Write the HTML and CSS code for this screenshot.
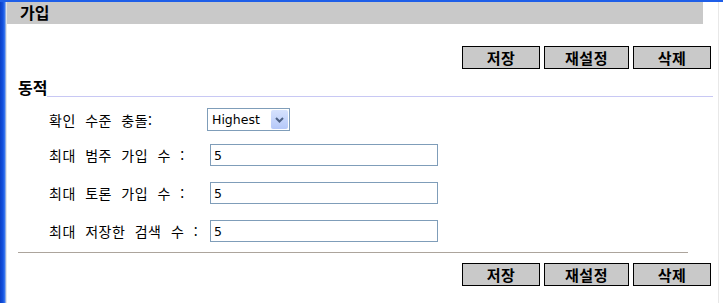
FILE: index.html
```html
<!DOCTYPE html>
<html lang="ko">
<head>
    <meta charset="UTF-8">
    <title>가입</title>
    <link rel="stylesheet" href="styles.css">
</head>
<body>
    <div class="window">
        <div class="edge"></div>
        <div class="content">
            <div class="titlebar">가입</div>

            <div class="toolbar">
                <button class="btn btn-save">저장</button>
                <button class="btn btn-reset">재설정</button>
                <button class="btn btn-delete">삭제</button>
            </div>

            <div class="section-head">
                <span class="section-title">동적</span>
                <span class="section-line"></span>
            </div>

            <form class="settings">
                <div class="row row-select">
                    <label for="level">확인 수준 충돌:</label>
                    <div class="select">
                        <span class="select-value">Highest</span>
                        <span class="select-arrow">
                            <svg width="9" height="6" viewBox="0 0 9 6"><path d="M1 1 L4.5 4.5 L8 1" fill="none" stroke="#4d6185" stroke-width="2"/></svg>
                        </span>
                    </div>
                </div>
                <div class="row">
                    <label for="max-cat">최대 범주 가입 수 :</label>
                    <input type="text" id="max-cat" value="5">
                </div>
                <div class="row">
                    <label for="max-topic">최대 토론 가입 수 :</label>
                    <input type="text" id="max-topic" value="5">
                </div>
                <div class="row">
                    <label for="max-search">최대 저장한 검색 수 :</label>
                    <input type="text" id="max-search" value="5">
                </div>
            </form>

            <div class="divider"></div>

            <div class="toolbar toolbar-bottom">
                <button class="btn btn-save">저장</button>
                <button class="btn btn-reset">재설정</button>
                <button class="btn btn-delete">삭제</button>
            </div>
        </div>
    </div>
</body>
</html>
```

FILE: styles.css
```css
body {
    margin: 0;
    background-color: #fff;
    color: #000;
    font-family: "Noto Sans CJK KR", "DejaVu Sans", sans-serif;
    overflow: hidden;
}
.window {
    display: flex;
    height: 303px;
    border-top: 2px solid #1f5fe8;
    box-sizing: border-box;
}
.edge {
    width: 7px;
    flex: none;
    background: linear-gradient(to right, #0b3fc4 0, #1452e0 3px, #3f7df2 5px, #d4d8dc 6px, #f2f2f2 7px);
}
.content {
    flex: 1;
    border-right: 1px solid #e8e8e8;
    margin-right: 4px;
}
.titlebar {
    height: 22px;
    margin-right: 15px;
    padding-left: 13px;
    background-color: #c9c9c9;
    font-size: 16px;
    font-weight: bold;
    line-height: 20px;
}
.toolbar {
    display: flex;
    justify-content: flex-end;
    gap: 4px;
    margin-top: 22px;
    margin-right: 7px;
}
.toolbar-bottom {
    margin-top: 10px;
}
.btn {
    height: 23px;
    padding: 0;
    border: 1px solid #000;
    background-color: #c9c9c9;
    font-family: "Noto Sans CJK KR", sans-serif;
    font-size: 15px;
    font-weight: bold;
    line-height: 20px;
    letter-spacing: 0.5px;
}
.btn-save, .btn-delete {
    width: 78px;
}
.btn-reset {
    width: 85px;
}
.section-head {
    display: flex;
    align-items: flex-end;
    margin: 8px 5px 0 11px;
}
.section-title {
    font-size: 16px;
    font-weight: bold;
    line-height: 20px;
}
.section-line {
    flex: 1;
    border-bottom: 1px solid #c8c8f4;
}
.settings {
    margin-top: 11px;
    padding-left: 42px;
}
.row {
    display: flex;
    align-items: center;
    height: 22px;
    margin-top: 16px;
}
.row-select {
    height: 23px;
    margin-top: 0;
    margin-bottom: -3px;
}
label {
    width: 160px;
    flex: none;
    font-size: 14px;
    word-spacing: 5px;
    letter-spacing: 0.5px;
}
.select {
    display: flex;
    align-items: center;
    justify-content: space-between;
    width: 76px;
    height: 21px;
    border: 1px solid #7f9db9;
    padding: 0 1px 0 4px;
    box-sizing: content-box;
    margin-left: -2px;
}
.select-value {
    font-family: "DejaVu Sans", sans-serif;
    font-size: 12.5px;
}
.select-arrow {
    display: flex;
    align-items: center;
    justify-content: center;
    width: 17px;
    height: 19px;
    background: linear-gradient(#d6e2fd, #b5c8f9);
    border-radius: 2px;
}
input {
    width: 228px;
    height: 22px;
    box-sizing: border-box;
    border: 1px solid #7f9db9;
    padding: 0 3px;
    font-family: "DejaVu Sans", sans-serif;
    font-size: 12.5px;
    margin-left: 1px;
}
.divider {
    margin: 10px 30px 0 11px;
    border-top: 1px solid #aca49c;
}
```
